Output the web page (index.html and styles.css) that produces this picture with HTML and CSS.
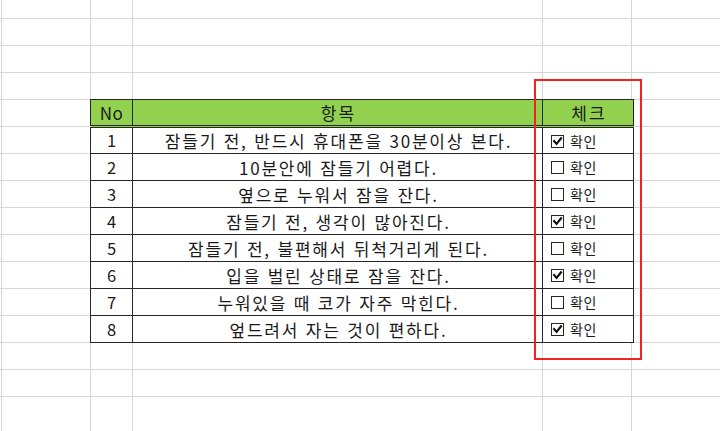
FILE: index.html
```html
<!DOCTYPE html>
<html lang="ko">
<head>
<meta charset="utf-8">
<link rel="stylesheet" href="styles.css">
</head>
<body>
<div class="sheet">
  <table class="survey">
    <colgroup>
      <col class="c-no"><col class="c-item"><col class="c-check">
    </colgroup>
    <thead>
      <tr><th>No</th><th class="wide">항목</th><th class="wide">체크</th></tr>
    </thead>
    <tbody>
      <tr><td class="no">1</td><td class="item">잠들기 전, 반드시 휴대폰을 30분이상 본다.</td><td class="chk"><span class="box on"><svg viewBox="0 0 12 12"><path d="M2.4 5.6 L5 8.6 L9.8 2.6"/></svg></span>확인</td></tr>
      <tr><td class="no">2</td><td class="item">10분안에 잠들기 어렵다.</td><td class="chk"><span class="box"></span>확인</td></tr>
      <tr><td class="no">3</td><td class="item">옆으로 누워서 잠을 잔다.</td><td class="chk"><span class="box"></span>확인</td></tr>
      <tr><td class="no">4</td><td class="item">잠들기 전, 생각이 많아진다.</td><td class="chk"><span class="box on"><svg viewBox="0 0 12 12"><path d="M2.4 5.6 L5 8.6 L9.8 2.6"/></svg></span>확인</td></tr>
      <tr><td class="no">5</td><td class="item">잠들기 전, 불편해서 뒤척거리게 된다.</td><td class="chk"><span class="box"></span>확인</td></tr>
      <tr><td class="no">6</td><td class="item">입을 벌린 상태로 잠을 잔다.</td><td class="chk"><span class="box on"><svg viewBox="0 0 12 12"><path d="M2.4 5.6 L5 8.6 L9.8 2.6"/></svg></span>확인</td></tr>
      <tr><td class="no">7</td><td class="item">누워있을 때 코가 자주 막힌다.</td><td class="chk"><span class="box"></span>확인</td></tr>
      <tr><td class="no">8</td><td class="item">엎드려서 자는 것이 편하다.</td><td class="chk"><span class="box on"><svg viewBox="0 0 12 12"><path d="M2.4 5.6 L5 8.6 L9.8 2.6"/></svg></span>확인</td></tr>
    </tbody>
  </table>
  <div class="highlight"></div>
</div>
</body>
</html>
```

FILE: styles.css
```css
html, body {
  margin: 0;
  padding: 0;
  background: #fff;
}

.sheet {
  position: relative;
  width: 720px;
  height: 431px;
  overflow: hidden;
  padding: 99px 0 0 90px;
  box-sizing: border-box;
  font-family: "Noto Sans CJK KR", "Noto Sans", sans-serif;
  color: #1a1a1a;
  background-image:
    linear-gradient(to right, transparent 1px, #d6d6d6 1px, #d6d6d6 2px, transparent 2px),
    linear-gradient(to right, transparent 90px, #d6d6d6 90px, #d6d6d6 91px, transparent 91px),
    linear-gradient(to right, transparent 132px, #d6d6d6 132px, #d6d6d6 133px, transparent 133px),
    linear-gradient(to right, transparent 542px, #d6d6d6 542px, #d6d6d6 543px, transparent 543px),
    linear-gradient(to right, transparent 631px, #d6d6d6 631px, #d6d6d6 632px, transparent 632px),
    repeating-linear-gradient(to bottom, transparent 0, transparent 26px, #d6d6d6 26px, #d6d6d6 27px);
  background-position: 0 0, 0 0, 0 0, 0 0, 0 0, 0 -8px;
}

.survey {
  border-collapse: collapse;
  table-layout: fixed;
  width: 543px;
  background: #fff;
}

.c-no { width: 42px; }
.c-item { width: 410px; }
.c-check { width: 91px; }

.survey th,
.survey td {
  height: 27px;
  padding: 0;
  border: 1px solid #262626;
  box-sizing: border-box;
  line-height: 1;
  white-space: nowrap;
}

.survey th {
  background: #92d050;
  font-weight: 400;
  font-size: 17px;
  text-align: center;
  border-bottom: 3px double #262626;
  letter-spacing: 0.5px;
}

.survey th.wide {
  letter-spacing: 2px;
  text-indent: 2px;
}

.survey td.no {
  text-align: center;
  font-size: 16.5px;
}

.survey td.item {
  text-align: center;
  font-size: 17px;
  letter-spacing: 1.8px;
  text-indent: 2px;
}

.survey td.chk {
  font-size: 14px;
  padding-left: 8px;
  letter-spacing: 0.5px;
}

.box {
  display: inline-block;
  width: 13px;
  height: 13px;
  border: 1px solid #262626;
  box-sizing: border-box;
  vertical-align: -1px;
  margin-right: 6px;
  background: #fff;
}

.box svg {
  display: block;
  width: 11px;
  height: 11px;
}

.box svg path {
  fill: none;
  stroke: #111;
  stroke-width: 2.4;
  stroke-linecap: square;
}

.highlight {
  position: absolute;
  left: 534px;
  top: 79px;
  width: 108px;
  height: 281px;
  border: 2px solid #f02222;
  box-sizing: border-box;
  pointer-events: none;
}
```
